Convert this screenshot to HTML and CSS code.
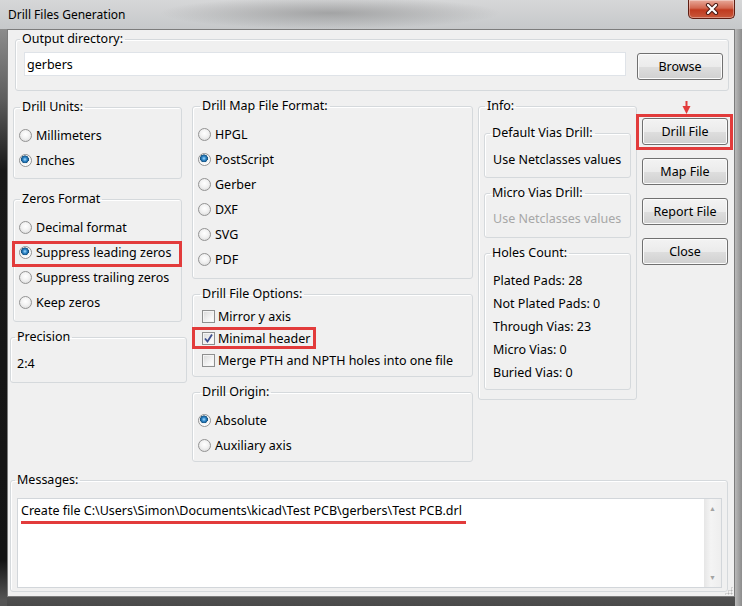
FILE: index.html
```html
<!DOCTYPE html>
<html lang="en">
<head>
  <meta charset="UTF-8" />
  <meta name="viewport" content="width=device-width, initial-scale=1.0"/>
  <title>Drill Files Generation</title>
  <link rel="stylesheet" href="styles.css">
</head>
<body>
  <div class="window">
    <div class="titlebar">
      <span class="title">Drill Files Generation</span>
      <div class="close-btn">
        <svg width="14" height="12" viewBox="0 0 14 12">
          <path d="M3 2 L11 10 M11 2 L3 10" stroke="#4a1a14" stroke-width="4.2" stroke-linecap="round"/>
          <path d="M3 2 L11 10 M11 2 L3 10" stroke="#fff" stroke-width="2.2" stroke-linecap="round"/>
        </svg>
      </div>
    </div>

    <div class="client">
      <fieldset class="group output-group">
        <legend>Output directory:</legend>
        <div class="output-row">
          <input class="text-field" type="text" value="gerbers">
          <button class="btn browse-btn">Browse</button>
        </div>
      </fieldset>

      <div class="main-row">
        <!-- left column -->
        <div class="col col-left">
          <fieldset class="group units-group">
            <legend>Drill Units:</legend>
            <label class="opt"><input class="radio" type="radio" name="units">Millimeters</label>
            <label class="opt"><input class="radio" type="radio" name="units" checked>Inches</label>
          </fieldset>

          <fieldset class="group zeros-group">
            <legend>Zeros Format</legend>
            <label class="opt"><input class="radio" type="radio" name="zeros">Decimal format</label>
            <label class="opt marked"><input class="radio" type="radio" name="zeros" checked>Suppress leading zeros</label>
            <label class="opt"><input class="radio" type="radio" name="zeros">Suppress trailing zeros</label>
            <label class="opt"><input class="radio" type="radio" name="zeros">Keep zeros</label>
          </fieldset>

          <fieldset class="group precision-group">
            <legend>Precision</legend>
            <div class="line">2:4</div>
          </fieldset>
        </div>

        <!-- middle column -->
        <div class="col col-mid">
          <fieldset class="group map-group">
            <legend>Drill Map File Format:</legend>
            <label class="opt"><input class="radio" type="radio" name="map">HPGL</label>
            <label class="opt"><input class="radio" type="radio" name="map" checked>PostScript</label>
            <label class="opt"><input class="radio" type="radio" name="map">Gerber</label>
            <label class="opt"><input class="radio" type="radio" name="map">DXF</label>
            <label class="opt"><input class="radio" type="radio" name="map">SVG</label>
            <label class="opt"><input class="radio" type="radio" name="map">PDF</label>
          </fieldset>

          <fieldset class="group options-group">
            <legend>Drill File Options:</legend>
            <div class="chk"><span class="box"></span>Mirror y axis</div>
            <div class="chk marked">
              <span class="box">
                <svg width="11" height="11" viewBox="0 0 11 11"><path d="M2 5.5 L4.5 8.5 L9 1.5" fill="none" stroke="#3d4f8e" stroke-width="1.8"/></svg>
              </span>Minimal header
            </div>
            <div class="chk"><span class="box"></span>Merge PTH and NPTH holes into one file</div>
          </fieldset>

          <fieldset class="group origin-group">
            <legend>Drill Origin:</legend>
            <label class="opt"><input class="radio" type="radio" name="origin" checked>Absolute</label>
            <label class="opt"><input class="radio" type="radio" name="origin">Auxiliary axis</label>
          </fieldset>
        </div>

        <!-- info column -->
        <fieldset class="group info-group">
          <legend>Info:</legend>
          <fieldset class="group sub-group vias-group">
            <legend>Default Vias Drill:</legend>
            <div class="line">Use Netclasses values</div>
          </fieldset>
          <fieldset class="group sub-group micro-group">
            <legend>Micro Vias Drill:</legend>
            <div class="line disabled">Use Netclasses values</div>
          </fieldset>
          <fieldset class="group sub-group holes-group">
            <legend>Holes Count:</legend>
            <div class="count">Plated Pads: 28</div>
            <div class="count">Not Plated Pads: 0</div>
            <div class="count">Through Vias: 23</div>
            <div class="count">Micro Vias: 0</div>
            <div class="count">Buried Vias: 0</div>
          </fieldset>
        </fieldset>

        <!-- buttons -->
        <div class="col col-buttons">
          <svg class="arrow" width="9" height="14" viewBox="0 0 9 14">
            <path d="M4.5 0 V7" stroke="#e23b3b" stroke-width="2"/>
            <path d="M0.5 5 H8.5 L4.5 13 Z" fill="#e23b3b"/>
          </svg>
          <button class="btn marked">Drill File</button>
          <button class="btn">Map File</button>
          <button class="btn">Report File</button>
          <button class="btn">Close</button>
        </div>
      </div>

      <fieldset class="group messages-group">
        <legend>Messages:</legend>
        <div class="msg-box">
          <div class="msg-text">
            <span class="msg-line">Create file C:\Users\Simon\Documents\kicad\Test PCB\gerbers\Test PCB.drl</span>
          </div>
          <div class="scrollbar">
            <span class="arr">&#9650;</span>
            <span class="arr">&#9660;</span>
          </div>
        </div>
      </fieldset>
      <span class="grip"></span>
    </div>
  </div>
</body>
</html>
```

FILE: styles.css
```css
* {
  box-sizing: border-box;
}

body {
  margin: 0;
  background: #777;
  font-family: "Noto Sans", "Liberation Sans", sans-serif;
  font-size: 12.5px;
  color: #000;
}

.window {
  width: 742px;
  height: 606px;
  display: flex;
  flex-direction: column;
  overflow: hidden;
  background:
    linear-gradient(to bottom, #a0a0a0 0, #5c5c5c 100px, #181818 170px, #141414 560px, #555 600px) left top / 7px 100% no-repeat,
    linear-gradient(to right, #b9b9b9, #8c8c8c) right top / 7px 100% no-repeat,
    linear-gradient(to bottom, #c4c4c4, #9a9a9a 80%, #4a4a4a);
}

/* title bar */
.titlebar {
  height: 29px;
  flex: none;
  display: flex;
  justify-content: space-between;
  align-items: flex-start;
  padding: 0 7px 0 8px;
  background:
    radial-gradient(ellipse 170px 16px at 330px 13px, rgba(80, 80, 80, 0.35), rgba(80, 80, 80, 0) 100%),
    linear-gradient(to bottom, #d6d7d8, #c6c8ca);
}

.title {
  font-size: 12px;
  line-height: 28px;
  padding-top: 1px;
  color: #000;
}

.close-btn {
  width: 47px;
  height: 19px;
  display: flex;
  align-items: center;
  justify-content: center;
  border: 1px solid #5e1d12;
  border-top: none;
  border-radius: 0 0 5px 5px;
  background: linear-gradient(to bottom, #e8a99a 0, #d26750 45%, #c03a1f 55%, #c8583b 100%);
  box-shadow: inset 0 0 0 1px rgba(255, 255, 255, 0.35);
}

/* client area */
.client {
  flex: 1;
  position: relative;
  margin: 0 7px 9px 7px;
  background: #f0f0f0;
  border: 1px solid #7c7c7c;
  display: flex;
  flex-direction: column;
}

.group {
  margin: 0;
  min-width: 0;
  border: 1px solid #d5d9dc;
  border-radius: 3px;
  box-shadow: inset 1px 1px 0 #fff;
}

.group legend {
  padding: 0 2px;
  line-height: 16px;
}

.output-group {
  margin: 1px 5px 0 7px;
  padding: 5px 5px 10px 8px;
}

.output-group legend {
  margin-left: -4px;
}

.output-row {
  display: flex;
  align-items: flex-start;
  gap: 11px;
}

.text-field {
  flex: 1;
  height: 24px;
  margin: 0;
  padding: 0 0 0 2px;
  border: 1px solid #dfe3e8;
  background: #fff;
  font: inherit;
  color: #000;
}

.btn {
  position: relative;
  width: 86px;
  height: 27px;
  margin: 0;
  padding: 0;
  font: inherit;
  color: #000;
  border: 1px solid #707070;
  border-radius: 3px;
  background: linear-gradient(to bottom, #f3f3f3 0, #ebebeb 50%, #dedede 51%, #d0d0d0 100%);
  box-shadow: inset 0 0 0 1px #fbfbfb;
}

.browse-btn {
  margin-top: 1px;
}

/* main row */
.main-row {
  display: flex;
  align-items: flex-start;
  gap: 5px;
  margin-top: 7px;
  padding-left: 2px;
}

.col {
  display: flex;
  flex-direction: column;
}

.col-left {
  width: 177px;
}

.col-mid {
  width: 281px;
}

.opt {
  position: relative;
  display: flex;
  align-items: center;
  height: 25px;
}

.radio {
  appearance: none;
  -webkit-appearance: none;
  width: 13px;
  height: 13px;
  margin: 0 4px 0 0;
  flex: none;
  border-radius: 50%;
  border: 1px solid #939393;
  background: radial-gradient(circle at 50% 40%, #fff 0, #f2f2f2 45%, #d4d4d4 100%);
}

.radio:checked {
  background: radial-gradient(circle at 45% 40%, #a6ddff 0, #2f86c8 22%, #13507f 42%, #f0f0f0 46%, #fff 70%, #d8d8d8 100%);
}

.units-group {
  margin: 1px 5px 0 3px;
  padding: 8px 0 5px 5px;
}

.zeros-group {
  margin: 12px 5px 0 3px;
  padding: 8px 0 6px 5px;
}

.units-group legend,
.zeros-group legend {
  margin-left: 1px;
}

.precision-group {
  margin-top: 7px;
  padding: 11px 0 10px 6px;
}

.precision-group legend,
.messages-group legend {
  margin-left: -2px;
}

.line {
  line-height: 16px;
}

.disabled {
  color: #a7a7a7;
}

.map-group {
  padding: 8px 0 6px 5px;
}

.map-group legend,
.origin-group legend {
  margin-left: 2px;
}

.options-group {
  margin-top: 7px;
  padding: 3px 0 5px 9px;
}

.options-group legend {
  margin-left: -2px;
}

.chk {
  position: relative;
  display: flex;
  align-items: center;
  height: 22px;
  width: max-content;
}

.chk .box {
  width: 13px;
  height: 13px;
  margin-right: 3px;
  display: flex;
  align-items: center;
  justify-content: center;
  border: 1px solid #8e8f8f;
  background: linear-gradient(135deg, #d9d9d9, #f7f7f7 70%, #fff);
  box-shadow: inset 0 0 0 1px #f4f4f4;
}

.origin-group {
  margin-top: 7px;
  padding: 8px 0 3px 5px;
}

/* info column */
.info-group {
  width: 159px;
  padding: 11px 5px 9px 5px;
}

.info-group > legend {
  margin-left: 1px;
}

.sub-group legend {
  margin-left: -3px;
}

.vias-group {
  padding: 11px 0 9px 8px;
}

.micro-group {
  margin-top: 7px;
  padding: 10px 0 10px 8px;
}

.holes-group {
  margin-top: 7px;
  padding: 8px 0 5px 8px;
}

.count {
  height: 23px;
  line-height: 23px;
}

/* buttons column */
.col-buttons {
  position: relative;
  width: 86px;
  gap: 13px;
  padding-top: 20px;
}

.arrow {
  position: absolute;
  left: 40px;
  top: 3px;
}

/* red annotation boxes */
.marked::after {
  content: "";
  position: absolute;
  border: 3px solid #e23b3b;
  pointer-events: none;
}

.opt.marked::after {
  left: -7px;
  right: -1px;
  top: 1px;
  bottom: -2px;
}

.chk.marked::after {
  left: -10px;
  right: -6px;
  top: 0;
  bottom: 0;
}

.btn.marked::after {
  left: -7px;
  right: -6px;
  top: -5px;
  bottom: -6px;
}

/* messages */
.messages-group {
  margin: 10px 6px 0 2px;
  padding: 10px 5px 3px 6px;
}

.msg-box {
  display: flex;
  height: 90px;
  border: 1px solid #d2d6da;
  background: #fff;
}

.msg-text {
  flex: 1;
  padding: 4px 0 0 3px;
  font-size: 12.5px;
  line-height: 16px;
}

.msg-line {
  display: inline-block;
  padding: 0 4px 2px 0;
  border-bottom: 3px solid #e23b3b;
}

.scrollbar {
  width: 17px;
  display: flex;
  flex-direction: column;
  justify-content: space-between;
  align-items: center;
  padding: 5px 0 4px;
  background: linear-gradient(to right, #e6e6e6, #f4f4f4 40%, #eeeeee);
}

.arr {
  font-size: 7px;
  line-height: 10px;
  color: #a3a3a3;
}

.grip {
  position: absolute;
  right: 1px;
  bottom: 1px;
  width: 9px;
  height: 9px;
  background: radial-gradient(circle, #b5b5b5 0.8px, transparent 1.2px) 0 0 / 3px 3px;
  clip-path: polygon(100% 0, 100% 100%, 0 100%);
}
```
